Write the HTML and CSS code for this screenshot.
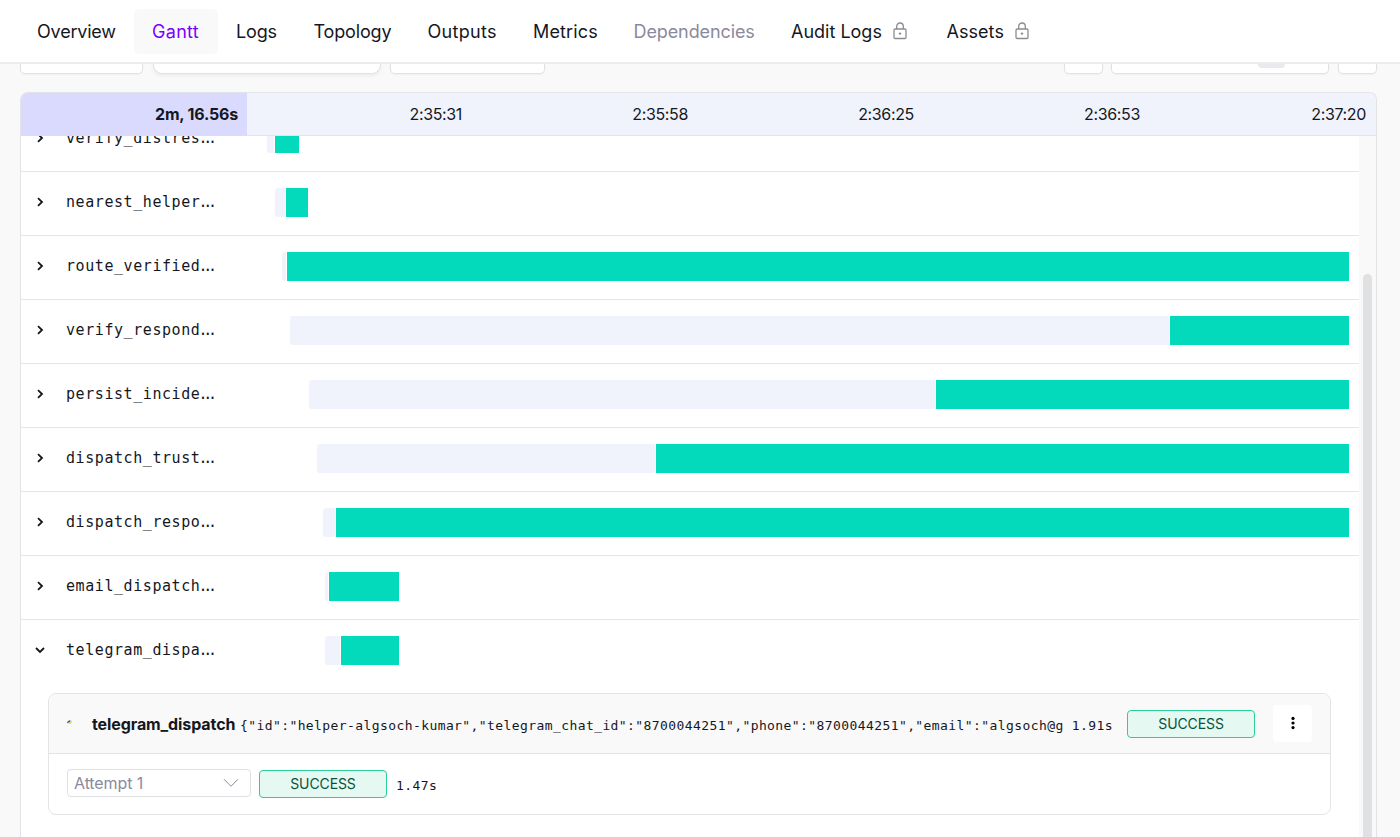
FILE: index.html
```html
<!DOCTYPE html>
<html lang="en">
<head>
  <meta charset="UTF-8">
  <meta name="viewport" content="width=device-width, initial-scale=1.0">
  <title>Gantt</title>
  <link rel="stylesheet" href="styles.css">
</head>
<body>

  <nav class="tabs">
    <a class="tab overview">Overview</a>
    <a class="tab gantt active">Gantt</a>
    <a class="tab logs">Logs</a>
    <a class="tab topology">Topology</a>
    <a class="tab outputs">Outputs</a>
    <a class="tab metrics">Metrics</a>
    <a class="tab dependencies disabled">Dependencies</a>
    <a class="tab audit"><span>Audit Logs</span>
      <svg class="lock" viewBox="0 0 14 18"><rect x="1" y="7" width="12" height="9.5" rx="1.2"/><path d="M3.7 7V4.3a3.3 3.3 0 0 1 6.6 0V7"/><circle cx="7" cy="11.6" r="1.2"/></svg>
    </a>
    <a class="tab assets"><span>Assets</span>
      <svg class="lock" viewBox="0 0 14 18"><rect x="1" y="7" width="12" height="9.5" rx="1.2"/><path d="M3.7 7V4.3a3.3 3.3 0 0 1 6.6 0V7"/><circle cx="7" cy="11.6" r="1.2"/></svg>
    </a>
  </nav>

  <!-- bottom edge of the filter toolbar, scrolled under the tabs -->
  <div class="toolbar">
    <div class="tool filter"></div>
    <div class="tool search"></div>
    <div class="tool columns"></div>
    <div class="tool save"></div>
    <div class="tool refresh"><span class="switch"></span></div>
    <div class="tool settings"></div>
  </div>

  <main class="panel">
    <div class="axis">
      <div class="total">2m, 16.56s</div>
      <div>2:35:31</div>
      <div>2:35:58</div>
      <div>2:36:25</div>
      <div>2:36:53</div>
      <div>2:37:20</div>
    </div>

    <div class="body">
      <div class="rows">
        <div class="row">
          <svg class="chevron" viewBox="0 0 12 12"><path d="M4 2.2L8 6L4 9.8"/></svg>
          <div class="name">verify_distres<i>...</i></div>
          <div class="track"><span class="wait" style="margin-left:1.81%;width:0.7%"></span><span class="run" style="width:2.25%"></span></div>
        </div>
        <div class="row">
          <svg class="chevron" viewBox="0 0 12 12"><path d="M4 2.2L8 6L4 9.8"/></svg>
          <div class="name">nearest_helper<i>...</i></div>
          <div class="track"><span class="wait" style="margin-left:2.54%;width:1%"></span><span class="run" style="width:2%"></span></div>
        </div>
        <div class="row">
          <svg class="chevron" viewBox="0 0 12 12"><path d="M4 2.2L8 6L4 9.8"/></svg>
          <div class="name">route_verified<i>...</i></div>
          <div class="track"><span class="wait" style="margin-left:3.22%;width:0.43%"></span><span class="run" style="width:96.35%"></span></div>
        </div>
        <div class="row">
          <svg class="chevron" viewBox="0 0 12 12"><path d="M4 2.2L8 6L4 9.8"/></svg>
          <div class="name">verify_respond<i>...</i></div>
          <div class="track"><span class="wait" style="margin-left:3.9%;width:79.86%"></span><span class="run" style="width:16.24%"></span></div>
        </div>
        <div class="row">
          <svg class="chevron" viewBox="0 0 12 12"><path d="M4 2.2L8 6L4 9.8"/></svg>
          <div class="name">persist_incide<i>...</i></div>
          <div class="track"><span class="wait" style="margin-left:5.62%;width:56.9%"></span><span class="run" style="width:37.48%"></span></div>
        </div>
        <div class="row">
          <svg class="chevron" viewBox="0 0 12 12"><path d="M4 2.2L8 6L4 9.8"/></svg>
          <div class="name">dispatch_trust<i>...</i></div>
          <div class="track"><span class="wait" style="margin-left:6.31%;width:30.8%"></span><span class="run" style="width:62.89%"></span></div>
        </div>
        <div class="row">
          <svg class="chevron" viewBox="0 0 12 12"><path d="M4 2.2L8 6L4 9.8"/></svg>
          <div class="name">dispatch_respo<i>...</i></div>
          <div class="track"><span class="wait" style="margin-left:6.9%;width:1.18%"></span><span class="run" style="width:91.92%"></span></div>
        </div>
        <div class="row">
          <svg class="chevron" viewBox="0 0 12 12"><path d="M4 2.2L8 6L4 9.8"/></svg>
          <div class="name">email_dispatch<i>...</i></div>
          <div class="track"><span class="wait" style="margin-left:7.08%;width:0.32%"></span><span class="run" style="width:6.39%"></span></div>
        </div>
        <div class="row open">
          <svg class="chevron" viewBox="0 0 12 12"><path d="M2 4L6 8L10 4"/></svg>
          <div class="name">telegram_dispa<i>...</i></div>
          <div class="track"><span class="wait" style="margin-left:7.08%;width:1.47%"></span><span class="run" style="width:5.24%"></span></div>
        </div>

        <div class="task">
          <div class="task-head">
            <svg class="python" viewBox="0 0 5 4"><path d="M0 2.6Q0.3 0.6 3.4 0V1.8L0.8 3.2Z" fill="#24699f"/><path d="M4.8 0.6Q5.2 3.6 2 4L1 3.1L3.8 1.6Z" fill="#ffd32e"/></svg>
            <div class="task-name">telegram_dispatch</div>
            <div class="task-value">{"id":"helper-algsoch-kumar","telegram_chat_id":"8700044251","phone":"8700044251","email":"algsoch@g</div>
            <div class="duration">1.91s</div>
            <div class="status">SUCCESS</div>
            <button class="more" type="button">
              <svg viewBox="0 0 4 14"><circle cx="2" cy="2.4" r="1.6"/><circle cx="2" cy="7" r="1.6"/><circle cx="2" cy="11.6" r="1.6"/></svg>
            </button>
          </div>
          <div class="task-body">
            <div class="select">
              <span>Attempt 1</span>
              <svg viewBox="0 0 16 10"><path d="M1 1.2L8 8.3L15 1.2"/></svg>
            </div>
            <div class="status">SUCCESS</div>
            <div class="duration">1.47s</div>
          </div>
        </div>
      </div>
      <div class="scrollbar"><div class="thumb"></div></div>
    </div>
  </main>

</body>
</html>
```

FILE: styles.css
```css
* {
  box-sizing: border-box;
}

body {
  margin: 0;
  height: 837px;
  overflow: hidden;
  background-color: #f9f9f9;
  color: #15171f;
  font-family: Inter, "Liberation Sans", sans-serif;
  display: flex;
  flex-direction: column;
}

/* tabs */
.tabs {
  flex: none;
  display: flex;
  height: 64px;
  padding: 9px 19px 0;
  background-color: #fff;
  border-bottom: 2px solid #ededee;
}

.tab {
  display: flex;
  align-items: center;
  height: 45px;
  padding: 0 0 0 18px;
  border-radius: 5px;
  font-size: 18px;
  white-space: nowrap;
}

.tab.active {
  background-color: #f9f9f9;
  color: #7a00ff;
}

.tab.disabled {
  color: #8b899d;
}

.overview { width: 115px; letter-spacing: -0.2px; }
.gantt { width: 84px; letter-spacing: 0.3px; }
.logs { width: 77.5px; letter-spacing: -0.15px; }
.topology { width: 114px; letter-spacing: -0.15px; }
.outputs { width: 105.5px; letter-spacing: 0.3px; }
.metrics { width: 100.5px; letter-spacing: 0.15px; }
.dependencies { width: 157.5px; letter-spacing: -0.1px; }
.audit { width: 155.5px; }
.assets { width: 110px; letter-spacing: 0.05px; }

.lock {
  width: 14px;
  height: 18px;
  margin: -1px 0 0 11px;
  fill: none;
  stroke: #8b8b93;
  stroke-width: 1.3;
}

.lock circle {
  fill: #8b8b93;
  stroke: none;
}

/* toolbar */
.toolbar {
  flex: none;
  display: flex;
  height: 28px;
  padding: 0 23px 0 20px;
}

.tool {
  height: 10px;
  background-color: #fff;
  border: 1px solid #e1e1e4;
  border-top: none;
  border-radius: 0 0 5px 5px;
  box-shadow: 0 1px 2px rgba(0, 0, 0, 0.04);
}

.filter { width: 123px; margin-right: 10px; }
.columns { width: 155px; margin-right: auto; }
.save { width: 39px; margin-right: 8px; }
.settings { width: 39px; }

.search {
  width: 228px;
  margin-right: 9px;
  border-radius: 0 0 9px 9px;
  box-shadow: 0 2px 4px rgba(0, 0, 0, 0.06);
}

.refresh {
  display: flex;
  justify-content: flex-end;
  width: 218px;
  margin-right: 9px;
  padding-right: 43px;
}

.switch {
  width: 27px;
  height: 4px;
  background-color: #e9e9ee;
  border-radius: 0 0 5px 5px;
}

/* gantt */
.panel {
  flex: 1;
  min-height: 0;
  display: flex;
  flex-direction: column;
  margin: 0 23px 0 20px;
  background-color: #fff;
  border: 1px solid #e2e3e6;
  border-bottom: none;
  border-radius: 8px 8px 0 0;
  overflow: hidden;
}

.axis {
  flex: none;
  display: grid;
  grid-template-columns: repeat(6, 226px);
  height: 43px;
  background-color: #f0f3fc;
  border-bottom: 1px solid #e2e4e9;
  font-size: 16px;
  letter-spacing: -0.35px;
  line-height: 43px;
  text-align: right;
}

.axis div {
  padding-right: 11px;
}

.axis .total {
  padding-right: 9px;
  background-color: #dadaff;
  font-weight: 700;
  letter-spacing: -0.2px;
}

.body {
  flex: 1;
  min-height: 0;
  display: flex;
  overflow: hidden;
}

.rows {
  width: 1338px;
  margin-top: -28px;
}

.row {
  display: flex;
  height: 64px;
  padding: 16px 0 18px 12px;
  border-bottom: 1px solid #e4e5e7;
}

.row.open {
  border-bottom: none;
}

.chevron {
  width: 12px;
  height: 12px;
  margin: 8px 21px 0 1px;
  fill: none;
  stroke: #15171f;
  stroke-width: 1.8;
}

.name {
  width: 180px;
  margin-left: -1px;
  margin-right: 1px;
  font-family: "DejaVu Sans Mono", monospace;
  font-size: 15px;
  letter-spacing: 0.57px;
  line-height: 29px;
  white-space: nowrap;
}

.name i {
  margin-left: -2px;
  font-style: normal;
  letter-spacing: -4.2px;
}

.track {
  display: flex;
  width: 1102px;
  height: 29px;
}

.wait {
  background-color: #f0f3fc;
  border-right: 1px solid #fff;
  border-radius: 3px 0 0 3px;
}

.run {
  background-color: #03dabc;
}

/* expanded task */
.task {
  width: 1283px;
  height: 122px;
  margin: 9px 0 0 27px;
  border: 1px solid #e3e4e6;
  border-radius: 8px;
  overflow: hidden;
}

.task-head {
  display: flex;
  align-items: center;
  height: 60px;
  padding: 0 18px;
  background-color: #f9f9f9;
  border-bottom: 1px solid #e3e4e6;
}

.python {
  width: 5px;
  height: 4px;
  margin: -3px 20px 0 0;
}

.task-name {
  width: 148px;
  font-size: 16px;
  font-weight: 700;
  letter-spacing: -0.1px;
}

.task-value {
  width: 824px;
  margin-right: 8px;
  overflow: hidden;
}

.task-value,
.duration {
  padding-top: 3px;
  font-family: "DejaVu Sans Mono", monospace;
  font-size: 13px;
  letter-spacing: 0.41px;
  white-space: nowrap;
}

.status {
  width: 128px;
  height: 28px;
  background-color: #e5f8f2;
  border: 1px solid #2bcd9b;
  border-radius: 4px;
  color: #07543a;
  font-size: 14px;
  letter-spacing: -0.1px;
  line-height: 25px;
  text-align: center;
}

.task-head .status {
  margin: 0 18px 0 14px;
}

.more {
  display: flex;
  align-items: center;
  justify-content: center;
  width: 39px;
  height: 37px;
  margin-top: -1px;
  padding: 0;
  background-color: #fff;
  border: none;
  border-radius: 4px;
}

.more svg {
  width: 4px;
  height: 14px;
}

.task-body {
  display: flex;
  align-items: center;
  height: 60px;
  padding: 0 18px;
}

.select {
  display: flex;
  align-items: center;
  justify-content: space-between;
  width: 184px;
  height: 28px;
  margin: -2px 8px 0 0;
  padding: 0 11px 0 6px;
  border: 1px solid #dfe0e3;
  border-radius: 4px;
  color: #8b899d;
  font-size: 16px;
  letter-spacing: -0.1px;
}

.select svg {
  width: 16px;
  height: 10px;
  fill: none;
  stroke: #8b899d;
}

.task-body .duration {
  margin-left: 9px;
}

.scrollbar {
  width: 17px;
  padding: 138px 4px 0 4px;
  background-color: #f9f9f9;
}

.thumb {
  height: 100%;
  background-color: #e0e1e3;
  border-radius: 5px 5px 0 0;
}
```
